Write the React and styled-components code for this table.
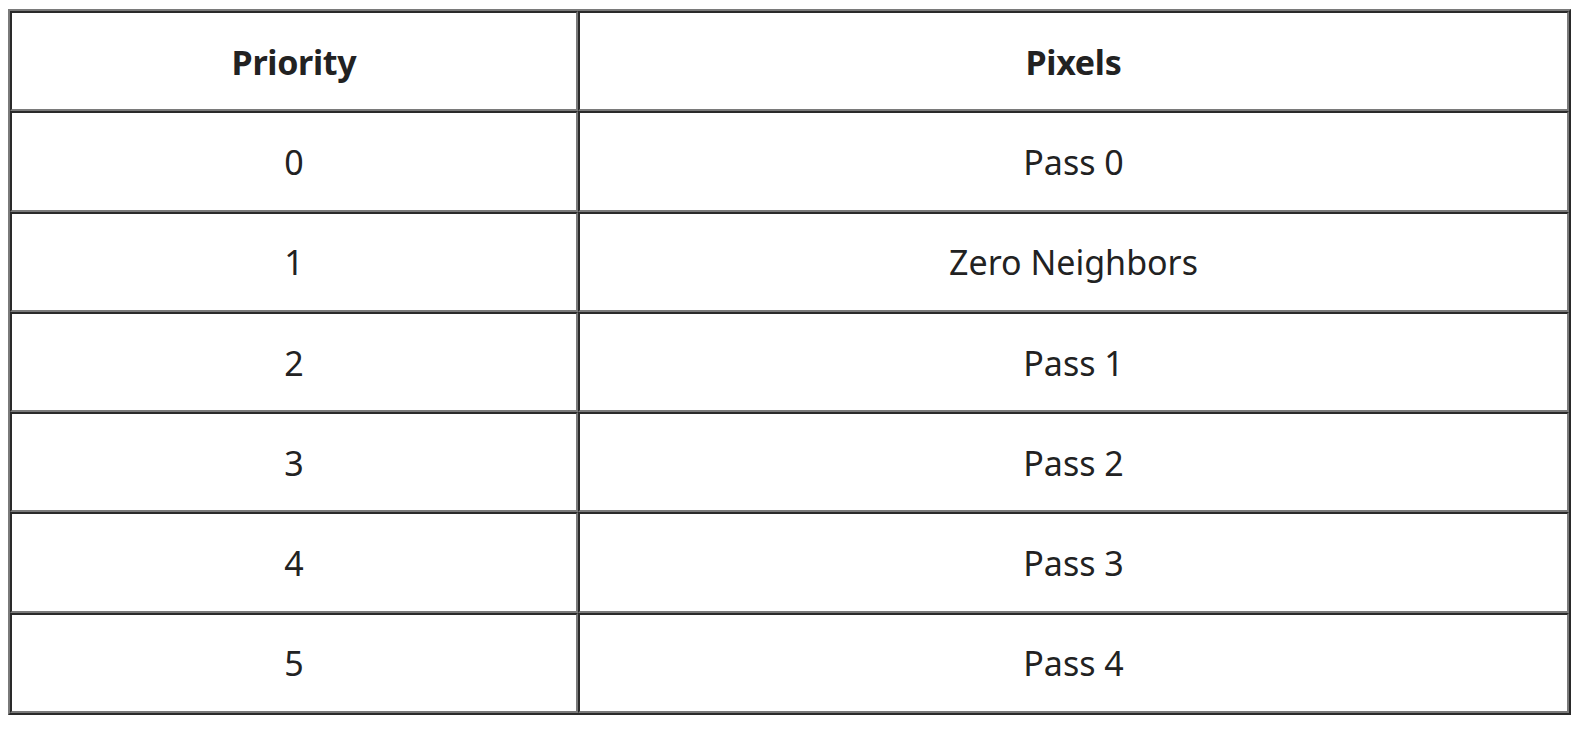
import React from "react";
import styled, { createGlobalStyle } from "styled-components";

const Global = createGlobalStyle`
  html, body { margin: 0; padding: 0; background: #ffffff; }
  body { font-family: "Noto Sans", "Noto Sans CJK KR", sans-serif; color: #222222; }
`;

const Page = styled.div`
  padding: 9px 7px 0 8px;
`;

const Table = styled.table`
  width: 1563px;
  border-collapse: separate;
  border-spacing: 0;
  border-style: solid;
  border-width: 2px;
  border-color: #7a7a7a #2a2a2a #2a2a2a #7a7a7a;
  table-layout: fixed;
`;

const Cell = styled.td`
  box-sizing: border-box;
  height: 100.3px;
  padding: 1px 0 0;
  border-style: solid;
  border-width: 2px;
  border-color: #2a2a2a #7a7a7a #7a7a7a #2a2a2a;
  text-align: center;
  vertical-align: middle;
  font-size: 34px;
  font-weight: ${(p) => (p.$head ? 700 : 400)};
  letter-spacing: ${(p) => (p.$head ? "-0.3px" : "0")};
  color: #222222;
  width: ${(p) => p.$w || "auto"};
`;

const rows = [
  ["0", "Pass 0"],
  ["1", "Zero Neighbors"],
  ["2", "Pass 1"],
  ["3", "Pass 2"],
  ["4", "Pass 3"],
  ["5", "Pass 4"],
];

export default function App() {
  return (
    <>
      <Global />
      <Page>
        <Table>
          <thead>
            <tr>
              <Cell as="th" $head $w="568px">Priority</Cell>
              <Cell as="th" $head>Pixels</Cell>
            </tr>
          </thead>
          <tbody>
            {rows.map(([a, b]) => (
              <tr key={a}>
                <Cell>{a}</Cell>
                <Cell>{b}</Cell>
              </tr>
            ))}
          </tbody>
        </Table>
      </Page>
    </>
  );
}
